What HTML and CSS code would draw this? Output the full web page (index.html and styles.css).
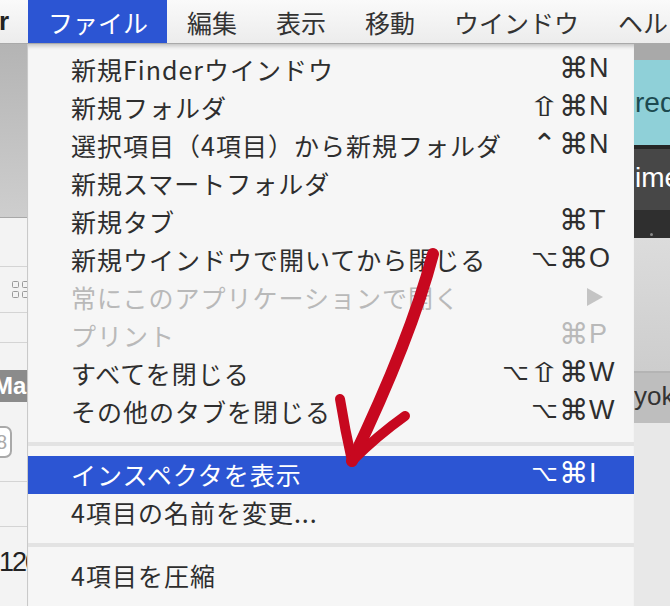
FILE: index.html
```html
<!DOCTYPE html>
<html lang="ja">
<head>
  <meta charset="UTF-8">
  <title>Finder ファイルメニュー</title>
  <link rel="stylesheet" href="styles.css">
</head>
<body>

  <!-- Menu Bar -->
  <div class="menubar">
    <span class="app-name">r</span>
    <span class="menubar-item active">ファイル</span>
    <span class="menubar-item">編集</span>
    <span class="menubar-item">表示</span>
    <span class="menubar-item">移動</span>
    <span class="menubar-item">ウインドウ</span>
    <span class="menubar-item">ヘルプ</span>
  </div>

  <div class="screen">

    <!-- Finder window behind the menu (left edge) -->
    <div class="win-left">
      <div class="lt-toolbar"></div>
      <div class="lt-row lt-h49"></div>
      <div class="lt-row lt-h46">
        <span class="grid-icon"><i></i><i></i><i></i><i></i></span>
      </div>
      <div class="lt-row lt-h30"></div>
      <div class="lt-gap"></div>
      <div class="lt-mac">Mac</div>
      <div class="lt-row lt-h80"><span class="lt-btn">8</span></div>
      <div class="lt-row lt-h45"></div>
      <div class="lt-num">120</div>
    </div>

    <!-- File Menu -->
    <div class="menu">
      <div class="menu-item">
        <span class="label">新規Finderウインドウ</span>
        <span class="shortcut"><i>⌘</i><b>N</b></span>
      </div>
      <div class="menu-item">
        <span class="label">新規フォルダ</span>
        <span class="shortcut"><i class="shift">⇧</i><i>⌘</i><b>N</b></span>
      </div>
      <div class="menu-item">
        <span class="label">選択項目（4項目）から新規フォルダ</span>
        <span class="shortcut"><i>⌃</i><i>⌘</i><b>N</b></span>
      </div>
      <div class="menu-item">
        <span class="label">新規スマートフォルダ</span>
      </div>
      <div class="menu-item">
        <span class="label">新規タブ</span>
        <span class="shortcut"><i>⌘</i><b>T</b></span>
      </div>
      <div class="menu-item">
        <span class="label">新規ウインドウで開いてから閉じる</span>
        <span class="shortcut"><i class="opt">⌥</i><i>⌘</i><b>O</b></span>
      </div>
      <div class="menu-item disabled">
        <span class="label">常にこのアプリケーションで開く</span>
        <span class="submenu"></span>
      </div>
      <div class="menu-item disabled">
        <span class="label">プリント</span>
        <span class="shortcut"><i>⌘</i><b>P</b></span>
      </div>
      <div class="menu-item">
        <span class="label">すべてを閉じる</span>
        <span class="shortcut"><i class="opt">⌥</i><i class="shift">⇧</i><i>⌘</i><b>W</b></span>
      </div>
      <div class="menu-item">
        <span class="label">その他のタブを閉じる</span>
        <span class="shortcut"><i class="opt">⌥</i><i>⌘</i><b>W</b></span>
      </div>
      <div class="separator"></div>
      <div class="menu-item selected">
        <span class="label">インスペクタを表示</span>
        <span class="shortcut"><i class="opt">⌥</i><i>⌘</i><b>I</b></span>
      </div>
      <div class="menu-item">
        <span class="label">4項目の名前を変更...</span>
      </div>
      <div class="separator"></div>
      <div class="menu-item">
        <span class="label">4項目を圧縮</span>
      </div>
      <div class="separator"></div>
    </div>

    <!-- Browser window behind the menu (right edge) -->
    <div class="win-right">
      <div class="rt-top"></div>
      <div class="rt-teal">red</div>
      <div class="rt-dark">ime</div>
      <div class="rt-darker"><span class="rt-dot"></span></div>
      <div class="rt-light"></div>
      <div class="rt-tab">yoku</div>
      <div class="rt-body"></div>
    </div>
  </div>

  <!-- Hand-drawn annotation arrow -->
  <svg class="arrow" width="670" height="606" viewBox="0 0 670 606">
    <g fill="none" stroke="#c7081f" stroke-linecap="round" stroke-linejoin="round">
      <path d="M433 254 Q411 338 352 461" stroke-width="12"/>
      <path d="M340 399 Q345 430 352 461" stroke-width="10"/>
      <path d="M405 416 Q377 436 353 460" stroke-width="10"/>
    </g>
  </svg>

</body>
</html>
```

FILE: styles.css
```css
/* Reset and Basic Styles */
* {
  margin: 0;
  padding: 0;
  box-sizing: border-box;
}

html, body {
  width: 670px;
  height: 606px;
  overflow: hidden;
}

body {
  position: relative;
  background: #e6e6e6;
  font-family: "Noto Sans CJK JP", "Noto Sans", sans-serif;
  color: #2e2e2e;
}

/* Menu Bar */
.menubar {
  display: flex;
  align-items: stretch;
  height: 44px;
  background: linear-gradient(#fafafa, #ececec);
  border-bottom: 1px solid #a9a9a9;
  font-size: 25px;
  white-space: nowrap;
  overflow: hidden;
}

.menubar > span {
  flex-shrink: 0;
}

.app-name {
  display: flex;
  align-items: center;
  width: 28px;
  margin-left: -1px;
  font-family: "Liberation Sans", sans-serif;
  font-weight: bold;
  font-size: 26px;
  color: #222;
}

.menubar-item {
  display: flex;
  align-items: center;
  padding: 0 19px 0 20px;
  color: #333;
}

.menubar-item.active {
  margin-left: 1px;
  background: #2c55d3;
  color: #fff;
}

/* Screen area below the menu bar */
.screen {
  display: flex;
  height: 562px;
  overflow: hidden;
}

/* Left window strip */
.win-left {
  width: 28px;
  flex-shrink: 0;
  background: #f3f3f3;
  border-right: 1px solid #c9c9c9;
  overflow: hidden;
}

.lt-toolbar {
  height: 174px;
  background: linear-gradient(#b4b4b4, #cecece);
  border-bottom: 1px solid #a8a8a8;
}

.lt-row {
  border-bottom: 1px solid #d4d4d4;
  display: flex;
  align-items: center;
}

.lt-h49 { height: 49px; }
.lt-h46 { height: 46px; }
.lt-h30 { height: 30px; }
.lt-h80 { height: 80px; }
.lt-h45 { height: 45px; }

.lt-gap {
  height: 27px;
}

.grid-icon {
  display: grid;
  grid-template-columns: 7px 7px;
  gap: 3px;
  margin-left: 12px;
}

.grid-icon i {
  width: 7px;
  height: 7px;
  border: 1.5px solid #9a9a9a;
  border-radius: 1.5px;
}

.lt-mac {
  height: 32px;
  background: #8b8b8b;
  color: #fff;
  font-family: "Liberation Sans", sans-serif;
  font-weight: bold;
  font-size: 24px;
  line-height: 32px;
  margin-left: -7px;
  white-space: nowrap;
}

.lt-btn {
  display: block;
  width: 24px;
  height: 32px;
  margin-left: -12px;
  border: 2px solid #a9a9a9;
  border-radius: 7px;
  background: #fff;
  color: #aaa;
  font-family: "Liberation Sans", sans-serif;
  font-size: 20px;
  line-height: 28px;
  text-align: right;
  padding-right: 3px;
}

.lt-num {
  padding-top: 20px;
  margin-left: -1px;
  font-family: "Liberation Sans", sans-serif;
  font-size: 27px;
  letter-spacing: -2px;
  color: #222;
  white-space: nowrap;
}

/* File Menu */
.menu {
  width: 606px;
  flex-shrink: 0;
  background: #f6f6f6;
  padding-top: 7px;
  box-shadow: inset 0 5px 4px -3px rgba(0, 0, 0, 0.22);
}

.menu-item {
  display: flex;
  align-items: center;
  justify-content: space-between;
  height: 38px;
  padding: 0 17px 3px 43px;
  font-size: 25px;
  letter-spacing: 1px;
  white-space: nowrap;
}

.menu-item.disabled {
  color: #b9b9b9;
}

.menu-item.selected {
  background: #2c55d3;
  color: #fff;
}

/* Keyboard shortcut: modifier slots right-aligned, key column left-aligned */
.shortcut {
  display: flex;
  align-items: center;
  letter-spacing: 0;
}

.shortcut i {
  display: inline-block;
  width: 29px;
  font-style: normal;
  font-family: "DejaVu Sans", sans-serif;
  font-size: 29px;
  line-height: 1;
  text-align: center;
}

.shortcut i.opt {
  font-size: 23px;
}

.shortcut i.shift {
  font-size: 27px;
  transform: scaleX(1.45);
}

.shortcut b {
  width: 29px;
  padding-left: 1px;
  font-weight: normal;
  font-family: "Liberation Sans", sans-serif;
  font-size: 27px;
  line-height: 1;
}

.submenu {
  width: 0;
  height: 0;
  margin-right: 14px;
  border-left: 16px solid #c4c4c4;
  border-top: 9px solid transparent;
  border-bottom: 9px solid transparent;
}

.separator {
  height: 25px;
  padding-top: 11px;
}

.separator::after {
  content: "";
  display: block;
  height: 4px;
  background: #e3e3e3;
}

/* Right window strip */
.win-right {
  flex: 1;
  overflow: hidden;
  background: #e6e6e6;
  box-shadow: inset 3px 0 3px -2px rgba(0, 0, 0, 0.25);
  font-family: "Liberation Sans", sans-serif;
  white-space: nowrap;
}

.rt-top {
  height: 16px;
  background: #a9a9a9;
}

.rt-teal {
  height: 85px;
  background: #8fd0d8;
  color: #1c4a50;
  font-size: 28px;
  line-height: 85px;
  padding-left: 1px;
}

.rt-dark {
  height: 65px;
  background: #474747;
  border-top: 4px solid #262626;
  color: #fff;
  font-size: 28px;
  line-height: 58px;
  padding-left: 1px;
}

.rt-darker {
  height: 28px;
  background: #2f2f2f;
  position: relative;
}

.rt-dot {
  position: absolute;
  left: 16px;
  bottom: 2px;
  width: 3px;
  height: 3px;
  background: #888;
  border-radius: 50%;
}

.rt-light {
  height: 135px;
  background: linear-gradient(#dcdcdc, #cdcdcd);
  border-bottom: 2px solid #b4b4b4;
}

.rt-tab {
  height: 50px;
  background: #bebebe;
  color: #333;
  font-size: 26px;
  line-height: 46px;
}

.rt-body {
  height: 200px;
  background: #e8e8e8;
}

/* Annotation */
.arrow {
  position: absolute;
  top: 0;
  left: 0;
  pointer-events: none;
}
```
